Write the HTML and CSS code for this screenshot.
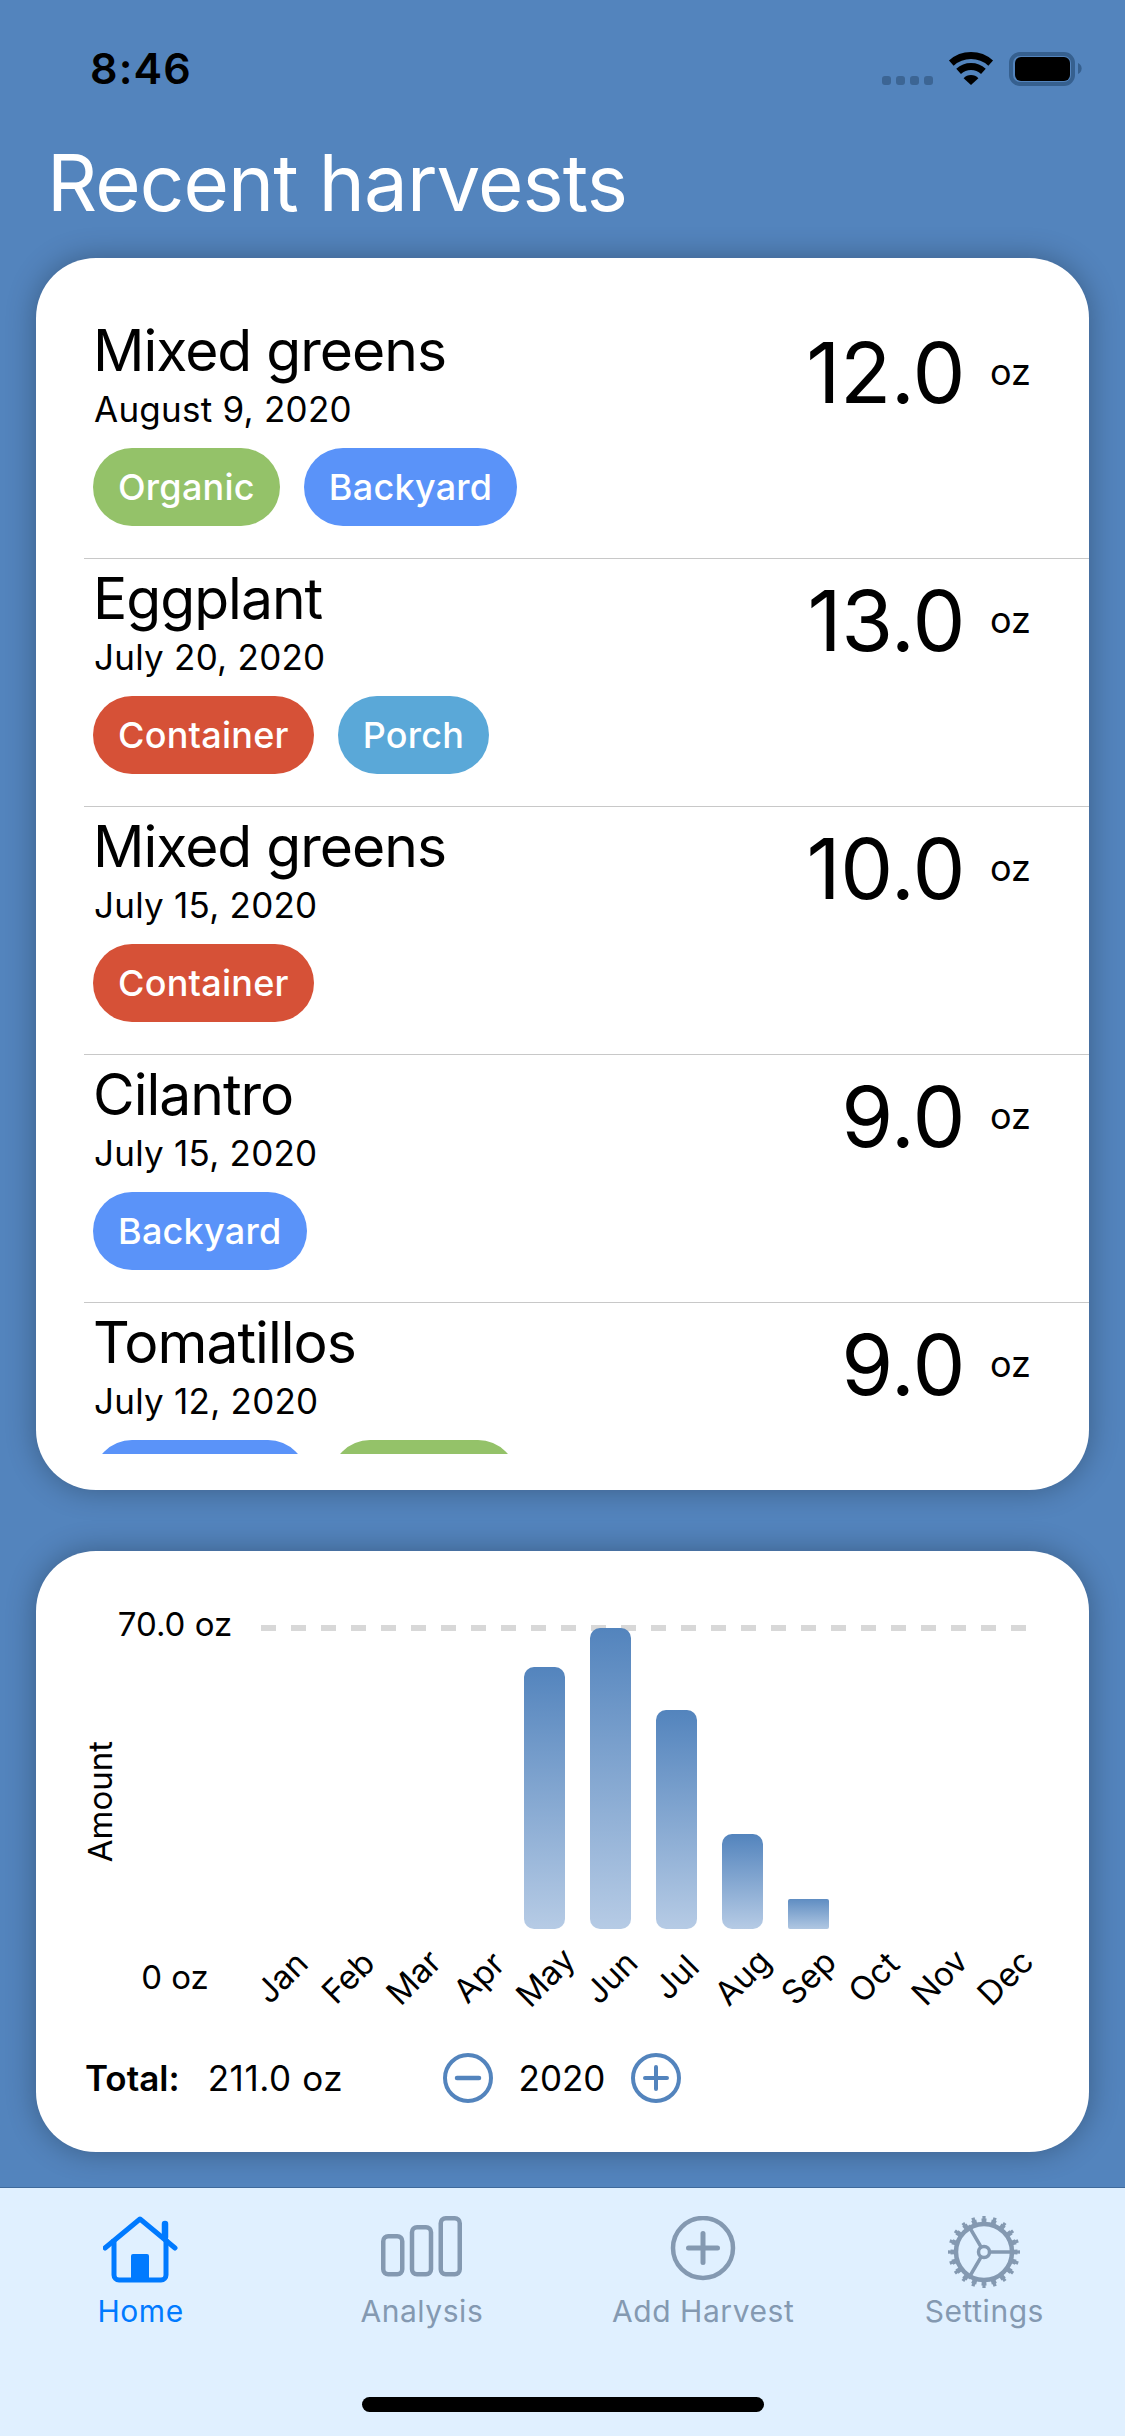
FILE: index.html
```html
<!DOCTYPE html>
<html lang="en">
<head>
    <meta charset="UTF-8">
    <meta name="viewport" content="width=device-width, initial-scale=1.0">
    <title>Recent harvests</title>
    <link rel="stylesheet" href="styles.css">
</head>
<body>
    <div class="screen">
        <!-- Status bar -->
        <div class="status-bar">
            <span class="time">8:46</span>
            <div class="status-icons">
                <div class="signal"><i></i><i></i><i></i><i></i></div>
                <svg class="wifi" width="46" height="34" viewBox="0 0 46 34">
                    <path d="M3.3 11.1A29.5 29.5 0 0 1 42.7 11.1" fill="none" stroke="#000" stroke-width="7"/>
                    <path d="M10.6 19.3A18.5 18.5 0 0 1 35.4 19.3" fill="none" stroke="#000" stroke-width="7"/>
                    <path d="M23 33L15.6 26.3A10 10 0 0 1 30.4 26.3Z" fill="#000"/>
                </svg>
                <svg class="battery" width="73" height="34" viewBox="0 0 73 34">
                    <rect x="2" y="2" width="62" height="30" rx="9" fill="none" stroke="#36608f" stroke-width="4"/>
                    <rect x="6" y="5" width="55" height="24" rx="6" fill="#000"/>
                    <path d="M69 11a6 6 0 0 1 0 11Z" fill="#36608f"/>
                </svg>
            </div>
        </div>

        <h1 class="page-title">Recent harvests</h1>

        <!-- Harvest list -->
        <section class="card list-card">
            <div class="harvest-list">
                <div class="harvest">
                    <div class="harvest-info">
                        <div class="harvest-name">Mixed greens</div>
                        <div class="harvest-date">August 9, 2020</div>
                        <div class="tags">
                            <span class="tag tag-green">Organic</span>
                            <span class="tag tag-blue">Backyard</span>
                        </div>
                    </div>
                    <div class="harvest-amount"><span class="amount-num">12.0</span><span class="amount-unit">oz</span></div>
                </div>
                <div class="harvest">
                    <div class="harvest-info">
                        <div class="harvest-name">Eggplant</div>
                        <div class="harvest-date">July 20, 2020</div>
                        <div class="tags">
                            <span class="tag tag-red">Container</span>
                            <span class="tag tag-sky">Porch</span>
                        </div>
                    </div>
                    <div class="harvest-amount"><span class="amount-num">13.0</span><span class="amount-unit">oz</span></div>
                </div>
                <div class="harvest">
                    <div class="harvest-info">
                        <div class="harvest-name">Mixed greens</div>
                        <div class="harvest-date">July 15, 2020</div>
                        <div class="tags">
                            <span class="tag tag-red">Container</span>
                        </div>
                    </div>
                    <div class="harvest-amount"><span class="amount-num">10.0</span><span class="amount-unit">oz</span></div>
                </div>
                <div class="harvest">
                    <div class="harvest-info">
                        <div class="harvest-name">Cilantro</div>
                        <div class="harvest-date">July 15, 2020</div>
                        <div class="tags">
                            <span class="tag tag-blue">Backyard</span>
                        </div>
                    </div>
                    <div class="harvest-amount"><span class="amount-num">9.0</span><span class="amount-unit">oz</span></div>
                </div>
                <div class="harvest">
                    <div class="harvest-info">
                        <div class="harvest-name">Tomatillos</div>
                        <div class="harvest-date">July 12, 2020</div>
                        <div class="tags">
                            <span class="tag tag-blue">Backyard</span>
                            <span class="tag tag-green">Organic</span>
                        </div>
                    </div>
                    <div class="harvest-amount"><span class="amount-num">9.0</span><span class="amount-unit">oz</span></div>
                </div>
            </div>
        </section>

        <!-- Monthly chart -->
        <section class="card chart-card">
            <div class="chart">
                <div class="axis-title"><span>Amount</span></div>
                <div class="axis-labels">
                    <span>70.0 oz</span>
                    <span>0 oz</span>
                </div>
                <div class="plot">
                    <div class="max-line"></div>
                    <div class="bar-slot"></div>
                    <div class="bar-slot"></div>
                    <div class="bar-slot"></div>
                    <div class="bar-slot"></div>
                    <div class="bar-slot"><div class="bar" style="height: 262px"></div></div>
                    <div class="bar-slot"><div class="bar" style="height: 301px"></div></div>
                    <div class="bar-slot"><div class="bar" style="height: 219px"></div></div>
                    <div class="bar-slot"><div class="bar" style="height: 95px"></div></div>
                    <div class="bar-slot"><div class="bar bar-short" style="height: 30px"></div></div>
                    <div class="bar-slot"></div>
                    <div class="bar-slot"></div>
                    <div class="bar-slot"></div>
                </div>
                <div class="months">
                    <span>Jan</span><span>Feb</span><span>Mar</span><span>Apr</span>
                    <span>May</span><span>Jun</span><span>Jul</span><span>Aug</span>
                    <span>Sep</span><span>Oct</span><span>Nov</span><span>Dec</span>
                </div>
            </div>
            <div class="chart-footer">
                <div class="total"><strong>Total:</strong><span>211.0 oz</span></div>
                <div class="year-stepper">
                    <svg width="50" height="50" viewBox="0 0 50 50">
                        <circle cx="25" cy="25" r="23" fill="none" stroke="#5384bd" stroke-width="4"/>
                        <path d="M14 25H36" stroke="#5384bd" stroke-width="4.5" stroke-linecap="round"/>
                    </svg>
                    <span class="year">2020</span>
                    <svg width="50" height="50" viewBox="0 0 50 50">
                        <circle cx="25" cy="25" r="23" fill="none" stroke="#5384bd" stroke-width="4"/>
                        <path d="M14 25H36M25 14V36" stroke="#5384bd" stroke-width="4" stroke-linecap="round"/>
                    </svg>
                </div>
            </div>
        </section>

        <!-- Tab bar -->
        <nav class="tab-bar">
            <div class="tabs">
                <div class="tab tab-active">
                    <svg width="76" height="68" viewBox="0 0 76 68">
                        <path d="M2 32L37 3L72 32" fill="none" stroke="#007aff" stroke-width="5" stroke-linecap="round" stroke-linejoin="round"/>
                        <path d="M62 8V21" stroke="#007aff" stroke-width="6.5" stroke-linecap="round"/>
                        <path d="M11 23V59a5 5 0 0 0 5 5H58a5 5 0 0 0 5-5V23" fill="none" stroke="#007aff" stroke-width="5"/>
                        <path d="M28 40a2 2 0 0 1 2-2H44a2 2 0 0 1 2 2V64H28Z" fill="#007aff"/>
                    </svg>
                    <span>Home</span>
                </div>
                <div class="tab">
                    <svg width="81" height="68" viewBox="0 0 81 68">
                        <g fill="none" stroke="#8499b1" stroke-width="4.5">
                            <rect x="2.25" y="20.25" width="19" height="38" rx="5"/>
                            <rect x="31" y="11.25" width="19" height="47" rx="5"/>
                            <rect x="59.75" y="2.25" width="19" height="56" rx="5"/>
                        </g>
                    </svg>
                    <span>Analysis</span>
                </div>
                <div class="tab">
                    <svg width="66" height="68" viewBox="0 0 66 68">
                        <circle cx="33" cy="32" r="30" fill="none" stroke="#8499b1" stroke-width="4.5"/>
                        <path d="M18.5 32H47.5M33 17.5V46.5" stroke="#8499b1" stroke-width="5" stroke-linecap="round"/>
                    </svg>
                    <span>Add Harvest</span>
                </div>
                <div class="tab">
                    <svg class="gear-icon" width="72" height="72" viewBox="0 0 72 72">
                        <circle cx="36" cy="36" r="28" fill="none" stroke="#8499b1" stroke-width="4.5"/>
                        <circle cx="36" cy="36" r="31.5" fill="none" stroke="#8499b1" stroke-width="4" pathLength="20" stroke-dasharray="0.5 0.5" stroke-dashoffset="0.25"/>
                        <circle cx="36" cy="36" r="34.5" fill="none" stroke="#8499b1" stroke-width="3" pathLength="20" stroke-dasharray="0.3 0.7" stroke-dashoffset="0.15"/>
                        <circle cx="36" cy="36" r="5.5" fill="none" stroke="#8499b1" stroke-width="3.5"/>
                        <path d="M42 36H63M33 30.8L20.5 9.5M33 41.2L20.5 62.5" stroke="#8499b1" stroke-width="3.5"/>
                    </svg>
                    <span>Settings</span>
                </div>
            </div>
            <div class="home-indicator"></div>
        </nav>
    </div>
</body>
</html>
```

FILE: styles.css
```css
* {
    box-sizing: border-box;
    margin: 0;
    padding: 0;
}

body {
    background-color: #5384bd;
    color: #000;
    font-family: Inter, "Liberation Sans", sans-serif;
}

.screen {
    width: 1125px;
    height: 2436px;
    overflow: hidden;
    display: flex;
    flex-direction: column;
}

/* Status bar */
.status-bar {
    height: 98px;
    padding: 46px 43px 0 90px;
    display: flex;
    justify-content: space-between;
    align-items: flex-start;
}

.time {
    font-size: 43px;
    font-weight: 600;
    line-height: 44px;
    letter-spacing: 1.1px;
}

.status-icons {
    display: flex;
    align-items: flex-end;
    margin-top: 6px;
}

.signal {
    display: flex;
    gap: 5px;
    margin-right: 15px;
    margin-bottom: 1px;
}

.signal i {
    display: block;
    width: 9px;
    height: 9px;
    border-radius: 3px;
    background-color: #3c6594;
}

.battery {
    margin-left: 15px;
}

.page-title {
    height: 160px;
    padding: 40px 0 0 47px;
    font-size: 78px;
    font-weight: 400;
    line-height: 90px;
    letter-spacing: -0.9px;
    color: #fff;
}

/* Cards */
.card {
    margin: 0 36px;
    background-color: #fff;
    border-radius: 60px;
    box-shadow: 0 0 30px rgba(0, 0, 0, 0.3);
}

.list-card {
    height: 1232px;
    padding: 53px 0 36px 48px;
    margin-bottom: 61px;
}

.harvest-list {
    height: 100%;
    overflow: hidden;
}

.harvest {
    height: 248px;
    padding-left: 10px;
    padding-right: 58px;
    border-bottom: 1px solid #c8c8c8;
    display: flex;
    justify-content: space-between;
}

.harvest-name {
    font-size: 57px;
    line-height: 75px;
    letter-spacing: -1px;
    padding-top: 2px;
    margin-left: -1px;
}

.harvest-date {
    font-size: 35px;
    line-height: 42px;
    letter-spacing: 0.25px;
}

.tags {
    display: flex;
    gap: 24px;
    margin-top: 18px;
    margin-left: -1px;
}

.tag {
    height: 78px;
    padding: 0 25px;
    border-radius: 39px;
    font-size: 36px;
    font-weight: 500;
    line-height: 78px;
    letter-spacing: 0.25px;
    color: #fff;
}

.tag-green { background-color: #94c269; }
.tag-blue { background-color: #5a93f9; }
.tag-red { background-color: #d65137; }
.tag-sky { background-color: #5aa8d8; }

.harvest-amount {
    display: flex;
    align-items: center;
    height: 100px;
    padding-top: 22px;
}

.amount-num {
    font-size: 84px;
    letter-spacing: -0.4px;
}

.amount-unit {
    font-size: 36px;
    margin-left: 25px;
}

/* Chart */
.chart-card {
    height: 601px;
    padding: 77px 0 0 49px;
}

.chart {
    display: grid;
    grid-template-columns: 29px 147px 765px;
    grid-template-rows: 301px 80px;
}

.axis-title {
    grid-row: 1 / 3;
    padding-bottom: 34px;
    display: flex;
    align-items: center;
    justify-content: center;
}

.axis-title span {
    writing-mode: vertical-rl;
    transform: rotate(180deg);
    font-size: 33px;
}

.axis-labels {
    grid-row: 1 / 3;
    margin-top: -24px;
    margin-bottom: 12px;
    padding-right: 25px;
    display: flex;
    flex-direction: column;
    justify-content: space-between;
    align-items: center;
    font-size: 33px;
    line-height: 40px;
    white-space: nowrap;
}

.plot {
    position: relative;
    display: grid;
    grid-template-columns: repeat(12, 41px);
    justify-content: space-between;
    align-items: end;
}

.max-line {
    position: absolute;
    top: -3px;
    left: 0;
    right: 0;
    height: 6px;
    background: repeating-linear-gradient(to right, #d8d8d8 0, #d8d8d8 15px, transparent 15px, transparent 30px);
}

.bar-slot {
    position: relative;
}

.bar {
    background: linear-gradient(to bottom, #5384bd, #b6cbe5);
    border-radius: 10px;
}

.bar-short {
    background: linear-gradient(to bottom, #5f8dc2, #b0c7e2);
    border-radius: 2px;
}

.months {
    grid-column: 3;
    display: grid;
    grid-template-columns: repeat(12, 41px);
    justify-content: space-between;
    justify-items: center;
    align-items: center;
    padding-top: 16px;
    font-size: 33px;
}

.months span {
    transform: rotate(-45deg);
    white-space: nowrap;
}

.chart-footer {
    margin-top: 44px;
    display: flex;
    align-items: center;
    font-size: 35px;
}

.total {
    width: 358px;
    display: flex;
    gap: 28px;
}

.total strong {
    font-weight: 600;
}

.total span {
    letter-spacing: 0.6px;
}

.year-stepper {
    display: flex;
    align-items: center;
}

.year-stepper svg {
    display: block;
}

.year {
    width: 138px;
    text-align: center;
    font-size: 35px;
}

/* Tab bar */
.tab-bar {
    margin-top: 35px;
    flex: 1;
    background-color: #e0f0ff;
    border-top: 1px solid #3f6a9b;
    display: flex;
    flex-direction: column;
}

.tabs {
    display: grid;
    grid-template-columns: repeat(4, 1fr);
    padding-top: 28px;
}

.tab {
    display: flex;
    flex-direction: column;
    align-items: center;
    font-size: 30px;
    letter-spacing: 0.55px;
    color: #8499b1;
}

.tab svg {
    height: 68px;
}

.tab .gear-icon {
    height: 72px;
    margin-bottom: -4px;
}

.tab span {
    margin-top: 8px;
    line-height: 38px;
}

.tab-active {
    color: #007aff;
}

.home-indicator {
    width: 402px;
    height: 15px;
    margin: auto auto 24px;
    border-radius: 8px;
    background-color: #000;
}
```
